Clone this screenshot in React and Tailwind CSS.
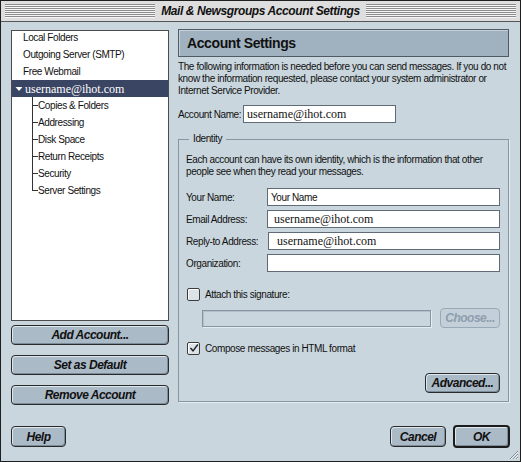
import React from "react";

const ui = "font-['Liberation_Sans',sans-serif]";
const small = "text-[10px] tracking-[-0.4px] whitespace-nowrap";

function MacButton({ children, className = "", disabled, isDefault }) {
  return (
    <div
      className={`flex items-center justify-center rounded-[4px] ${ui} italic font-bold tracking-[-0.5px] whitespace-nowrap ${
        disabled
          ? "border border-[#9aa9b6] bg-[#c4d0d9] text-[#8d9eae]"
          : isDefault
          ? "border-2 border-[#1c1c1c] bg-[#abbac7] text-[#111] shadow-[inset_1px_1px_0_#dfe7ee,inset_-1px_-1px_0_#7d8c99]"
          : "border border-[#2a2a2a] bg-[#abbac7] text-[#111] shadow-[inset_1px_1px_0_#dfe7ee,inset_-1px_-1px_0_#7d8c99]"
      } ${className}`}
    >
      {children}
    </div>
  );
}

function Checkbox({ checked }) {
  return (
    <div className="w-[13px] h-[13px] rounded-[2px] border border-[#3c3c3c] bg-[#dbe3e9] shadow-[inset_1px_1px_0_#fff] flex items-center justify-center">
      {checked && (
        <svg width="10" height="10" viewBox="0 0 10 10">
          <path d="M1.5 5 L4 7.8 L8.8 1.5" fill="none" stroke="#222" strokeWidth="1.4" />
        </svg>
      )}
    </div>
  );
}

function Field({ label, value, serif, box = "", pad = "pl-[3px]" }) {
  return (
    <div className="flex items-center h-[18px]">
      <span className={`w-[81px] ${small}`}>{label}</span>
      <div
        className={`flex-1 h-[18px] bg-white border border-[#5f6c77] flex items-center ${box} ${pad} ${
          serif ? "font-['Liberation_Serif',serif] text-[12px] whitespace-nowrap" : small
        }`}
      >
        {value}
      </div>
    </div>
  );
}

function TreeItem({ label, last }) {
  return (
    <div className="flex h-[17px] pl-[20px]">
      <div className="w-[6px] flex flex-col">
        <div className="flex-1 border-l border-b border-[#333]" />
        <div className={`flex-1 ${last ? "" : "border-l border-[#333]"}`} />
      </div>
      <span className="leading-[17px]">{label}</span>
    </div>
  );
}

export default function App() {
  const stripes =
    "h-[14px] flex-1 bg-[image:repeating-linear-gradient(to_bottom,#8c8c8c_0px,#8c8c8c_1px,#f6f6f6_1px,#f6f6f6_2px)]";

  return (
    <div className={`w-[521px] h-[462px] border border-[#1e1e1e] bg-[#c9d6dd] flex flex-col text-[#111] ${ui} relative overflow-hidden`}>
      {/* Title bar */}
      <div className="h-[21px] bg-[#dedede] border-b border-[#555] flex items-center px-[4px]">
        <div className={stripes} />
        <span className="px-[6px] text-[12px] tracking-[-0.4px] font-bold italic leading-none whitespace-nowrap">
          Mail &amp; Newsgroups Account Settings
        </span>
        <div className={stripes} />
      </div>

      <div className="flex flex-col px-[10px] pt-[8px]">
        <div className="flex gap-[9px] items-start">
          {/* Left column */}
          <div className="w-[158px] flex flex-col">
            <div className={`h-[291px] bg-white border border-[#4c4c4c] ${small}`}>
              <div className="h-[17px] pl-[11px] leading-[17px] -mt-[2px]">Local Folders</div>
              <div className="h-[17px] pl-[11px] leading-[17px]">Outgoing Server (SMTP)</div>
              <div className="h-[17px] pl-[11px] leading-[17px]">Free Webmail</div>
              <div className="h-[17px] bg-[#3a4463] text-white flex items-center">
                <svg width="22" height="17" viewBox="0 0 22 17" className="shrink-0">
                  <path d="M3.5 7 L10.5 7 L7 11 Z" fill="#fff" />
                </svg>
                <span className="font-['Liberation_Serif',serif] text-[12px] tracking-normal -ml-[9px]">username@ihot.com</span>
              </div>
              <TreeItem label="Copies & Folders" />
              <TreeItem label="Addressing" />
              <TreeItem label="Disk Space" />
              <TreeItem label="Return Receipts" />
              <TreeItem label="Security" />
              <TreeItem label="Server Settings" last />
            </div>
            <MacButton className="h-[20px] mt-[4px] text-[12px]">Add Account...</MacButton>
            <MacButton className="h-[20px] mt-[10px] text-[12px]">Set as Default</MacButton>
            <MacButton className="h-[20px] mt-[10px] text-[12px]">Remove Account</MacButton>
          </div>

          {/* Right column */}
          <div className="w-[331px] flex flex-col -mt-[1px]">
            <div className="h-[28px] bg-[#a0b2c0] border border-[#4f5a63] shadow-[inset_1px_1px_0_#c4d1db] flex items-center pl-[8px] text-[14px] tracking-[-0.4px] font-bold">
              Account Settings
            </div>
            <p className={`mt-[4px] leading-[12px] ${small}`}>
              The following information is needed before you can send messages. If you do not
              <br />
              know the information requested, please contact your system administrator or
              <br />
              Internet Service Provider.
            </p>
            <div className="flex items-center mt-[8px] h-[18px]">
              <span className={`w-[65px] ${small}`}>Account Name:</span>
              <div className="w-[153px] h-[18px] bg-white border border-[#5f6c77] flex items-center pl-[3px] font-['Liberation_Serif',serif] text-[12px] whitespace-nowrap">
                username@ihot.com
              </div>
            </div>

            <fieldset className="mt-[10px] border border-[#8796a2] shadow-[1px_1px_0_#e6edf2] px-[7px] pb-[8px]">
              <legend className={`ml-[3px] px-[4px] leading-[12px] ${small}`}>Identity</legend>
              <p className={`mt-[9px] leading-[12px] ${small}`}>
                Each account can have its own identity, which is the information that other
                <br />
                people see when they read your messages.
              </p>
              <div className="mt-[10px] flex flex-col gap-[4px] pr-[1px]">
                <Field label="Your Name:" value="Your Name" />
                <Field label="Email Address:" value="username@ihot.com" serif pad="pl-[6px]" />
                <Field label="Reply-to Address:" value="username@ihot.com" serif box="ml-[1px]" pad="pl-[8px]" />
                <Field label="Organization:" value="" />
              </div>
              <div className={`mt-[15px] flex items-center gap-[5px] pl-[1px] h-[14px] ${small}`}>
                <Checkbox />
                <span>Attach this signature:</span>
              </div>
              <div className="mt-[7px] flex items-center gap-[9px] pl-[16px] pr-[1px]">
                <div className="w-[229px] h-[17px] border border-[#8595a2] shadow-[inset_1px_1px_0_#b3c0ca,1px_1px_0_#e6edf2]" />
                <MacButton disabled className="flex-1 h-[20px] text-[12px]">Choose...</MacButton>
              </div>
              <div className={`mt-[13px] flex items-center gap-[5px] pl-[1px] h-[14px] ${small}`}>
                <Checkbox checked />
                <span>Compose messages in HTML format</span>
              </div>
              <div className="mt-[18px] flex justify-end pr-[1px]">
                <MacButton className="w-[75px] h-[20px] text-[12px]">Advanced...</MacButton>
              </div>
            </fieldset>
          </div>
        </div>

        {/* Bottom buttons */}
        <div className="mt-[20px] flex items-center">
          <MacButton className="w-[55px] h-[21px] text-[12px]">Help</MacButton>
          <div className="flex-1" />
          <MacButton className="w-[56px] h-[21px] text-[12px]">Cancel</MacButton>
          <MacButton isDefault className="w-[57px] h-[23px] ml-[7px] text-[12px]">OK</MacButton>
        </div>
      </div>

      {/* resize grip */}
      <svg width="12" height="12" viewBox="0 0 12 12" className="absolute right-[1px] bottom-[1px]">
        <path d="M11 3 L3 11 M11 6 L6 11 M11 9 L9 11" stroke="#7f8c96" strokeWidth="1" />
        <path d="M11 4 L4 11 M11 7 L7 11 M11 10 L10 11" stroke="#eef3f6" strokeWidth="1" />
      </svg>
    </div>
  );
}
